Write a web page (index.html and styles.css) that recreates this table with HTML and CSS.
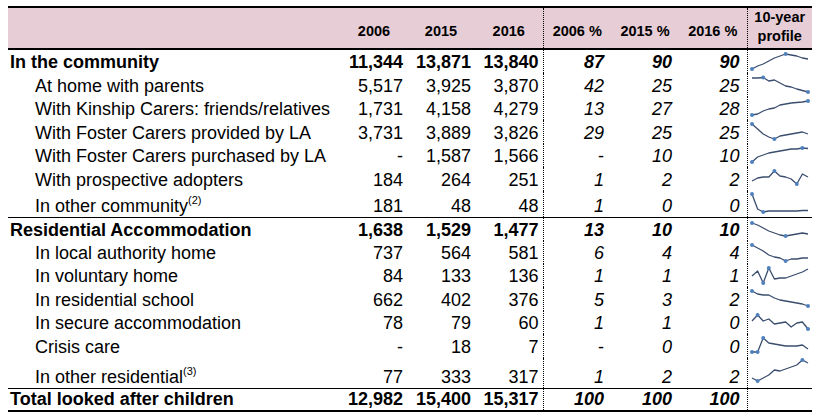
FILE: index.html
```html
<!DOCTYPE html>
<html lang="en">
<head>
    <meta charset="UTF-8">
    <meta name="viewport" content="width=device-width, initial-scale=1.0">
    <title>Looked after children by placement</title>
    <link rel="stylesheet" href="styles.css">
</head>
<body>
    <table class="placements">
        <colgroup>
            <col class="c-label">
            <col class="c-num06">
            <col class="c-num">
            <col class="c-num">
            <col class="c-num">
            <col class="c-num">
            <col class="c-num">
            <col class="c-spark">
        </colgroup>
        <thead>
            <tr>
                <th></th>
                <th>2006</th>
                <th>2015</th>
                <th>2016</th>
                <th class="split">2006 %</th>
                <th>2015 %</th>
                <th>2016 %</th>
                <th class="split profile">10-year<br>profile</th>
            </tr>
        </thead>
        <tbody>
            <tr class="group">
                <td class="label">In the community</td>
                <td>11,344</td><td>13,871</td><td>13,840</td>
                <td class="pct split">87</td><td class="pct">90</td><td class="pct">90</td>
                <td class="spark split">
                    <svg><polyline points="3,19 8.6,16 14.2,14 19.8,11 25.4,8 31,6 36.6,4 42.2,5 47.8,6 53.4,8 59,9"/><circle cx="3" cy="19" r="2"/><circle cx="36.6" cy="4" r="2"/></svg>
                </td>
            </tr>
            <tr>
                <td class="label sub">At home with parents</td>
                <td>5,517</td><td>3,925</td><td>3,870</td>
                <td class="pct split">42</td><td class="pct">25</td><td class="pct">25</td>
                <td class="spark split">
                    <svg><polyline points="3,5 8.6,5 14.2,4.5 19.8,8 25.4,7 31,10 36.6,13 42.2,14 47.8,16 53.4,17.5 59,19"/><circle cx="14.2" cy="4.5" r="2"/><circle cx="59" cy="19" r="2"/></svg>
                </td>
            </tr>
            <tr class="short">
                <td class="label sub">With Kinship Carers: friends/relatives</td>
                <td>1,731</td><td>4,158</td><td>4,279</td>
                <td class="pct split">13</td><td class="pct">27</td><td class="pct">28</td>
                <td class="spark split">
                    <svg><polyline points="3,18 8.6,17 14.2,14 19.8,12 25.4,11 31,8 36.6,7 42.2,6 47.8,5.5 53.4,5 59,4"/><circle cx="3" cy="18" r="2"/><circle cx="59" cy="4" r="2"/></svg>
                </td>
            </tr>
            <tr>
                <td class="label sub">With Foster Carers provided by LA</td>
                <td>3,731</td><td>3,889</td><td>3,826</td>
                <td class="pct split">29</td><td class="pct">25</td><td class="pct">25</td>
                <td class="spark split">
                    <svg><polyline points="3,4 8.6,9 14.2,14 19.8,17 25.4,19 31,16 36.6,15 42.2,14 47.8,13 53.4,12 59,14"/><circle cx="3" cy="4" r="2"/><circle cx="25.4" cy="19" r="2"/></svg>
                </td>
            </tr>
            <tr class="short">
                <td class="label sub">With Foster Carers purchased by LA</td>
                <td>-</td><td>1,587</td><td>1,566</td>
                <td class="pct split dash">-</td><td class="pct">10</td><td class="pct">10</td>
                <td class="spark split">
                    <svg><polyline points="3,18 8.6,13 14.2,11 19.8,9 25.4,8 31,7 36.6,6 42.2,5 47.8,5 53.4,4 59,4.5"/><circle cx="3" cy="18" r="2"/><circle cx="53.4" cy="4" r="2"/></svg>
                </td>
            </tr>
            <tr>
                <td class="label sub">With prospective adopters</td>
                <td>184</td><td>264</td><td>251</td>
                <td class="pct split">1</td><td class="pct">2</td><td class="pct">2</td>
                <td class="spark split">
                    <svg><polyline points="3,14 8.6,11 14.2,10 19.8,10 25.4,4 31,9 36.6,10 42.2,12 47.8,17 53.4,7 59,10"/><circle cx="25.4" cy="4" r="2"/><circle cx="47.8" cy="17" r="2"/></svg>
                </td>
            </tr>
            <tr class="tall">
                <td class="label sub">In other community<sup>(2)</sup></td>
                <td>181</td><td>48</td><td>48</td>
                <td class="pct split">1</td><td class="pct">0</td><td class="pct">0</td>
                <td class="spark split">
                    <svg><polyline points="3,3 8.6,18 14.2,21 19.8,20 25.4,20 31,20 36.6,20 42.2,20 47.8,20 53.4,19.5 59,19.5"/><circle cx="3" cy="3" r="2"/><circle cx="14.2" cy="21" r="2"/></svg>
                </td>
            </tr>
            <tr class="group ruled">
                <td class="label">Residential Accommodation</td>
                <td>1,638</td><td>1,529</td><td>1,477</td>
                <td class="pct split">13</td><td class="pct">10</td><td class="pct">10</td>
                <td class="spark split">
                    <svg><polyline points="3,5 8.6,7 14.2,10 19.8,13 25.4,15 31,17 36.6,18 42.2,17 47.8,16 53.4,15 59,16"/><circle cx="3" cy="5" r="2"/><circle cx="36.6" cy="18" r="2"/></svg>
                </td>
            </tr>
            <tr class="short">
                <td class="label sub">In local authority home</td>
                <td>737</td><td>564</td><td>581</td>
                <td class="pct split">6</td><td class="pct">4</td><td class="pct">4</td>
                <td class="spark split">
                    <svg><polyline points="3,4 8.6,7 14.2,10 19.8,14 25.4,16 31,17 36.6,20 42.2,18 47.8,18 53.4,17 59,17"/><circle cx="3" cy="4" r="2"/><circle cx="36.6" cy="20" r="2"/></svg>
                </td>
            </tr>
            <tr class="short">
                <td class="label sub">In voluntary home</td>
                <td>84</td><td>133</td><td>136</td>
                <td class="pct split">1</td><td class="pct">1</td><td class="pct">1</td>
                <td class="spark split">
                    <svg><polyline points="3,12 8.6,7 14.2,19 19.8,4 25.4,15 31,14 36.6,14 42.2,12 47.8,10 53.4,8 59,5"/><circle cx="14.2" cy="19" r="2"/><circle cx="19.8" cy="4" r="2"/></svg>
                </td>
            </tr>
            <tr>
                <td class="label sub">In residential school</td>
                <td>662</td><td>402</td><td>376</td>
                <td class="pct split">5</td><td class="pct">3</td><td class="pct">2</td>
                <td class="spark split">
                    <svg><polyline points="3,4 8.6,7 14.2,8 19.8,8 25.4,11 31,13 36.6,14 42.2,15 47.8,16 53.4,17 59,19"/><circle cx="3" cy="4" r="2"/><circle cx="59" cy="19" r="2"/></svg>
                </td>
            </tr>
            <tr class="short">
                <td class="label sub">In secure accommodation</td>
                <td>78</td><td>79</td><td>60</td>
                <td class="pct split">1</td><td class="pct">1</td><td class="pct">0</td>
                <td class="spark split">
                    <svg><polyline points="3,10 8.6,4 14.2,10 19.8,8 25.4,13 31,12 36.6,11 42.2,16 47.8,12 53.4,11 59,18"/><circle cx="8.6" cy="4" r="2"/><circle cx="59" cy="18" r="2"/></svg>
                </td>
            </tr>
            <tr>
                <td class="label sub">Crisis care</td>
                <td>-</td><td>18</td><td>7</td>
                <td class="pct split dash">-</td><td class="pct">0</td><td class="pct">0</td>
                <td class="spark split">
                    <svg><polyline points="3,18 8.6,18 14.2,4 19.8,9 25.4,10 31,11 36.6,12 42.2,12 47.8,12 53.4,11 59,15"/><circle cx="3" cy="18" r="2"/><circle cx="8.6" cy="18" r="2"/><circle cx="14.2" cy="4" r="2"/></svg>
                </td>
            </tr>
            <tr class="taller">
                <td class="label sub">In other residential<sup>(3)</sup></td>
                <td>77</td><td>333</td><td>317</td>
                <td class="pct split">1</td><td class="pct">2</td><td class="pct">2</td>
                <td class="spark split">
                    <svg><polyline points="3,20 8.6,23 14.2,20 19.8,17 25.4,12 31,13 36.6,11 42.2,9 47.8,7 53.4,2 59,5"/><circle cx="8.6" cy="23" r="2"/><circle cx="53.4" cy="2" r="2"/></svg>
                </td>
            </tr>
            <tr class="group ruled short">
                <td class="label">Total looked after children</td>
                <td>12,982</td><td>15,400</td><td>15,317</td>
                <td class="pct split">100</td><td class="pct">100</td><td class="pct">100</td>
                <td class="spark split"></td>
            </tr>
        </tbody>
    </table>
</body>
</html>
```

FILE: styles.css
```css
body {
    margin: 0;
    background: #fff;
    font-family: "Liberation Sans", Arial, sans-serif;
    color: #000;
}

.placements {
    margin: 6px 0 0 8px;
    width: 804px;
    border-collapse: collapse;
    table-layout: fixed;
    border-top: 2px solid #000;
    border-bottom: 2px solid #000;
}

.c-label { width: 333px; }
.c-num06 { width: 66px; }
.c-num { width: 68px; }
.c-spark { width: 65px; }

/* header band */
thead tr {
    height: 40px;
    background: #e7cdd6;
    border-bottom: 2px solid #000;
}

th {
    font-size: 14.5px;
    font-weight: bold;
    line-height: 21px;
    padding: 0 0 6px 0;
    text-align: center;
    vertical-align: bottom;
}

th.profile {
    line-height: 19px;
    padding: 0 0 2px 0;
}

/* body rows */
tbody tr {
    height: 24px;
}

tbody tr.short {
    height: 23px;
}

tbody tr.tall {
    height: 26px;
}

tbody tr.taller {
    height: 30px;
}

tbody tr.ruled {
    border-top: 1px solid #000;
}

td {
    font-size: 18px;
    line-height: 20px;
    padding: 0 4px 1px 0;
    text-align: right;
    vertical-align: bottom;
    white-space: nowrap;
}

td.label {
    text-align: left;
    padding-left: 2px;
}

td.sub {
    padding-left: 27px;
}

td.pct {
    font-style: italic;
    padding-right: 7px;
}

td.dash {
    font-style: normal;
}

.group td {
    font-weight: bold;
}

.split {
    border-left: 1px dotted #000;
}

sup {
    font-size: 11px;
    line-height: 0;
    vertical-align: 8px;
}

/* sparklines: drawn in pixel units, allowed to spill past the small box */
td.spark {
    padding: 0;
    vertical-align: top;
}

td.spark svg {
    display: block;
    width: 62px;
    height: 18px;
    margin-left: 1px;
    overflow: visible;
}

td.spark polyline {
    fill: none;
    stroke: #3b4d6e;
    stroke-width: 1.3;
    stroke-linejoin: round;
}

td.spark circle {
    fill: #4f81bd;
    stroke: none;
}
```
